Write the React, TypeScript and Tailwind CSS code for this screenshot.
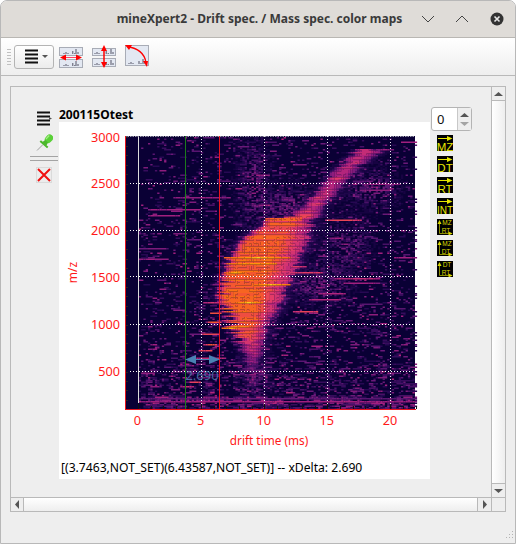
import { useMemo } from "react";

const PALETTE: [number, number[]][] = [
    [0, [10, 0, 53]],
    [0.15, [40, 8, 84]],
    [0.3, [100, 24, 120]],
    [0.45, [168, 32, 128]],
    [0.6, [226, 58, 106]],
    [0.72, [244, 84, 50]],
    [0.82, [250, 118, 16]],
    [0.92, [255, 160, 10]],
    [1, [255, 214, 40]],
];

const LEVELS = 24;

const RIDGE = [
    [149, 356, 376],
    [152, 352, 378],
    [165, 340, 358],
    [180, 325, 345],
    [200, 308, 328],
    [215, 290, 318],
    [218, 268, 310],
    [240, 240, 306],
    [258, 228, 296],
    [275, 220, 290],
    [300, 222, 280],
    [320, 228, 267],
    [335, 237, 263],
    [350, 241, 259],
    [365, 247, 257],
    [385, 250, 255],
];

const STREAKS = [
    [197, 174, 230, 0.42],
    [209, 150, 200, 0.45],
    [216, 150, 178, 0.45],
    [248, 138, 165, 0.36],
    [259, 138, 168, 0.42],
    [220, 326, 360, 0.66],
    [238, 330, 342, 0.45],
    [184, 365, 400, 0.42],
    [190, 360, 390, 0.4],
    [150, 378, 392, 0.42],
    [258, 395, 415, 0.45],
    [266, 285, 305, 0.6],
    [272, 290, 322, 0.62],
    [279, 335, 380, 0.52],
    [283, 345, 375, 0.45],
    [293, 320, 345, 0.5],
    [299, 310, 340, 0.5],
    [312, 295, 316, 0.66],
    [303, 205, 218, 0.56],
    [313, 212, 220, 0.72],
    [322, 208, 220, 0.72],
    [334, 203, 218, 0.66],
    [344, 205, 217, 0.72],
    [350, 200, 212, 0.66],
    [358, 198, 225, 0.52],
    [382, 190, 200, 0.66],
    [386, 182, 192, 0.56],
    [303, 233, 263, 0.98],
    [284, 252, 290, 0.97],
    [257, 226, 290, 0.97],
    [263, 228, 275, 0.9],
    [272, 225, 245, 0.96],
    [328, 222, 238, 0.96],
    [218, 267, 300, 0.8],
    [220, 266, 300, 0.78],
    [398, 138, 415, 0.3],
    [402, 138, 415, 0.46],
];

function colorAt(v: number) {
    for (let i = 1; i < PALETTE.length; i++) {
        if (v <= PALETTE[i][0]) {
            const [a, ca] = PALETTE[i - 1];
            const [b, cb] = PALETTE[i];
            const t = (v - a) / (b - a);
            const c = ca.map((n, k) => Math.round(n + (cb[k] - n) * t));
            return `rgb(${c[0]},${c[1]},${c[2]})`;
        }
    }
    return "rgb(255,214,40)";
}

function makeRandom(seed: number) {
    let s = seed;
    return () => {
        s = (s + 0x6d2b79f5) | 0;
        let t = Math.imul(s ^ (s >>> 15), 1 | s);
        t = (t + Math.imul(t ^ (t >>> 7), 61 | t)) ^ t;
        return ((t ^ (t >>> 14)) >>> 0) / 4294967296;
    };
}

function ridgeAt(y: number) {
    if (y < RIDGE[0][0] || y > RIDGE[RIDGE.length - 1][0]) return null;
    for (let i = 1; i < RIDGE.length; i++) {
        if (y <= RIDGE[i][0]) {
            const t = (y - RIDGE[i - 1][0]) / (RIDGE[i][0] - RIDGE[i - 1][0]);
            return [
                RIDGE[i - 1][1] + (RIDGE[i][1] - RIDGE[i - 1][1]) * t,
                RIDGE[i - 1][2] + (RIDGE[i][2] - RIDGE[i - 1][2]) * t,
            ];
        }
    }
    return null;
}

function coreAt(y: number) {
    if (y < 215) return 0.54;
    if (y < 240) return 0.66 + ((y - 215) / 25) * 0.12;
    if (y < 305) return 0.8;
    if (y < 330) return 0.8 - ((y - 305) / 25) * 0.06;
    if (y < 365) return 0.74 - ((y - 330) / 35) * 0.4;
    return 0.3;
}

function blob(x: number, y: number, cx: number, cy: number, rx: number, ry: number) {
    return Math.exp(-Math.pow((x - cx) / rx, 2) - Math.pow((y - cy) / ry, 2));
}

// heat map cells grouped by colour level, one path per level
function buildHeatPaths() {
    const rand = makeRandom(200115);
    const paths: string[] = Array.from({ length: LEVELS }, () => "");
    const cw = 2.3;
    const ch = 1.5;
    for (let y = 137; y < 409; y += ch) {
        const ridge = ridgeAt(y);
        const rowAmp = 0.6 + rand() * 0.6;
        const stripe = rand() < 0.12 ? 1.1 : 0.86 + rand() * 0.16;
        const density = y > 395 ? 0.72 : y > 360 ? 0.4 : y > 300 ? 0.22 : 0.15;
        const spread = y > 280 && y < 345 ? 16 : 7;
        const jl = (rand() - 0.5) * spread;
        const jh = (rand() - 0.5) * 7;
        let prev = 0;
        for (let x = 138.8; x < 415; x += cw) {
            let v = rand() < 0.3 ? prev : rand() < density ? 0.14 + Math.pow(rand(), 1.5) * 0.3 * rowAmp : 0;
            prev = v;

            // faint plumes around the main body
            const haze =
                blob(x, y, 252, 185, 16, 50) * 0.3 +
                blob(x, y, 372, 188, 24, 18) * 0.34 +
                blob(x, y, 345, 245, 24, 24) * 0.3 +
                blob(x, y, 318, 285, 28, 18) * 0.32 +
                blob(x, y, 290, 205, 24, 20) * 0.32 +
                blob(x, y, 252, 375, 14, 25) * 0.34;
            if (rand() < 0.6) v = Math.max(v, haze * (0.5 + rand() * 0.8));

            if (ridge) {
                const l = ridge[0] + jl;
                const h = Math.max(l + 2, ridge[1] + jh);
                const t = (x - l) / (h - l);
                const core = coreAt(y);
                let body = 0;
                if (t >= 0 && t <= 1) {
                    const fall = t > 0.6 ? 1 - ((t - 0.6) / 0.4) * 0.36 : 1;
                    const edge = Math.min(1, (x - l) / 7);
                    body = core * fall * (0.68 + 0.32 * edge) * stripe * (0.97 + rand() * 0.06);
                } else {
                    const d = t < 0 ? l - x : x - h;
                    body = core * 0.55 * Math.exp(-d / (t < 0 ? 4 : 6)) * (0.45 + rand() * 0.7);
                }
                v = Math.max(v, body);
            }

            for (const [sy, x1, x2, sv] of STREAKS) {
                if (y <= sy && sy < y + ch && x + cw > x1 && x < x2) {
                    const pos = Math.abs((x - (x1 + x2) / 2) / ((x2 - x1) / 2));
                    const edge = sv > 0.9 ? 1 - 0.2 * pos : 1 - 0.2 * pos * rand();
                    v = Math.max(v, sv * edge);
                }
            }

            const level = Math.min(LEVELS - 1, Math.floor(Math.min(1, v) * LEVELS));
            if (level > 0) {
                paths[level] += `M${x.toFixed(1)} ${y}h${cw}v${ch}h-${cw}z`;
            }
        }
    }
    return paths;
}

function MenuGlyph({ className, arrow }: { className: string; arrow?: boolean }) {
    return (
        <svg viewBox="0 0 16 15" className={className}>
            <path d="M1 0.500h13v2H1zM1 4.500h13v2H1zM1 8.500h13v2H1zM1 12.500h13v2H1z" fill="#111" />
            {arrow ? <path d="M13 6l3 1.500-3 1.500z" fill="#555" /> : null}
        </svg>
    );
}

function Peaks({ x, y, w }: { x: number; y: number; w: number }) {
    return (
        <path
            d={`M${x + 2} ${y}v-1M${x + 4} ${y}v-2M${x + 6} ${y}v-1M${x + w * 0.6} ${y}v-3M${x + w * 0.6 + 2} ${y}v-1M${x + w - 4} ${y}v-5M${x + w - 2} ${y}v-2`}
            stroke="#556"
            strokeWidth="1"
        />
    );
}

function HorizontalIcon() {
    return (
        <svg viewBox="0 0 24 22" className="h-[22px] w-6">
            <rect x="0.500" y="1.500" width="23" height="8" fill="#e3e8f2" stroke="#a8acb6" />
            <rect x="0.500" y="13.500" width="23" height="8" fill="#e3e8f2" stroke="#a8acb6" />
            <Peaks x={3} y={8} w={18} />
            <Peaks x={3} y={20} w={18} />
            <path d="M5 11.500h14" stroke="#f46" strokeWidth="1" />
            <path d="M1 11.500l6-3v6zM23 11.500l-6-3v6z" fill="#f00" />
        </svg>
    );
}

function VerticalIcon() {
    return (
        <svg viewBox="0 0 24 23" className="h-[23px] w-6">
            <rect x="0.500" y="3.500" width="23" height="7" fill="#e3e8f2" stroke="#a8acb6" />
            <rect x="0.500" y="13.500" width="23" height="8" fill="#e3e8f2" stroke="#a8acb6" />
            <Peaks x={1} y={9} w={22} />
            <Peaks x={1} y={20} w={22} />
            <path d="M12 4v15" stroke="#f00" strokeWidth="1.500" />
            <path d="M12 0l-3 6h6zM12 23l-3-6h6z" fill="#f00" />
        </svg>
    );
}

function CurveIcon() {
    return (
        <svg viewBox="0 0 24 22" className="mb-[1px] h-[22px] w-6">
            <rect x="0.500" y="0.500" width="23" height="20" fill="#e3e8f2" stroke="#a8acb6" />
            <Peaks x={2} y={19} w={20} />
            <path d="M3 2C12 3 20 8 21 18" fill="none" stroke="#f00" strokeWidth="1.300" />
            <path d="M0 0l7 0-3 5zM22 22l-4-6 5 0z" fill="#f00" />
        </svg>
    );
}

function PinIcon() {
    return (
        <svg viewBox="0 0 17 17" className="h-[17px] w-[17px]">
            <path d="M1 16.500l6-6" stroke="#a0a0a0" strokeWidth="1" />
            <g transform="rotate(42 10 8)">
                <rect x="6.500" y="-1" width="7" height="9" rx="3.400" fill="#5ad038" />
                <path d="M8 7h4l0.500 3h2.500v2h-10v-2h2.500z" fill="#4cb82c" />
                <path d="M8 1v5" stroke="#a4ee84" strokeWidth="1.300" />
            </g>
        </svg>
    );
}

function CloseIcon() {
    return (
        <svg viewBox="0 0 16 16" className="h-4 w-4">
            <rect x="0.500" y="0.500" width="15" height="15" fill="#ececec" stroke="#dadada" />
            <path d="M2 2l12 12M14 2l-12 12" stroke="#f01010" strokeWidth="2" />
        </svg>
    );
}

function ArrowBadge({ label }: { label: string }) {
    return (
        <svg viewBox="0 0 16 16" className="h-4 w-4">
            <rect width="16" height="16" fill="#000" />
            <path d="M1 3.500h10" stroke="#e6e600" strokeWidth="1" />
            <path d="M15.500 3.500l-5.500-2.500v5z" fill="#e6e600" />
            <text
                x="8"
                y="15.500"
                textAnchor="middle"
                fontSize={label.length > 2 ? 10 : 11.500}
                fill="#e6e600"
                fontFamily="'Liberation Sans', sans-serif"
            >
                {label}
            </text>
        </svg>
    );
}

function ColorMapBadge({ top, bottom }: { top: string; bottom: string }) {
    return (
        <svg viewBox="0 0 16 16" className="h-4 w-4">
            <rect width="16" height="16" fill="#000" />
            <path d="M2.500 2v12.500H15" stroke="#8c8c00" strokeWidth="1" fill="none" />
            <path d="M2.500 1l-2 4h4zM15.500 14.500l-4-2v4z" fill="#d8d800" />
            <text x="10" y="6" textAnchor="middle" fontSize="6.500" fill="#d8d800" fontFamily="'Liberation Sans', sans-serif">
                {top}
            </text>
            <text x="9" y="13.500" textAnchor="middle" fontSize="6.500" fill="#d8d800" fontFamily="'Liberation Sans', sans-serif">
                {bottom}
            </text>
        </svg>
    );
}

function ScrollArrow({ dir }: { dir: "up" | "down" | "left" | "right" }) {
    const d = {
        up: "M0 5l4.500-4 4.500 4z",
        down: "M0 1l4.500 4 4.500-4z",
        left: "M5 0l-4 4.500 4 4.500z",
        right: "M1 0l4 4.500-4 4.500z",
    }[dir];
    const box = dir === "up" || dir === "down" ? "0 0 9 6" : "0 0 6 9";
    const size = dir === "up" || dir === "down" ? "h-[6px] w-[9px]" : "h-[9px] w-[6px]";
    return (
        <svg viewBox={box} className={size}>
            <path d={d} fill="#555" />
        </svg>
    );
}

function HeatMap() {
    const paths = useMemo(buildHeatPaths, []);
    const xTicks = Array.from({ length: 23 }, (_, i) => i);
    const yTicks = Array.from({ length: 29 }, (_, i) => 136.5 + i * 9.4);
    const yLabels = [
        [3000, 137],
        [2500, 183.3],
        [2000, 230],
        [1500, 276.7],
        [1000, 324.3],
        [500, 371],
    ];
    const font = "'Noto Sans', sans-serif";
    return (
        <svg viewBox="59 122 371 331" className="block h-[331px] w-[371px]">
            <rect x="125" y="136" width="290" height="273.500" fill="#0a0035" />
            {paths.map((d, i) => (d ? <path key={i} d={d} fill={colorAt((i + 0.5) / LEVELS)} /> : null))}
            <path d="M138.500 136v267" stroke="#dcdcdc" strokeWidth="1" />
            <path d="M125 136.500h290" stroke="#a0a0b0" strokeDasharray="1.500 1" />
            {[183.5, 230.5, 276.5, 324.5, 371.5].map((y) => (
                <path key={y} d={`M130 ${y}h285`} stroke="#fff" strokeDasharray="1 2" />
            ))}
            {[201.5, 264.5, 327.5, 390.5].map((x) => (
                <path key={x} d={`M${x} 136v273`} stroke="#fff" strokeDasharray="1 2" opacity="0.9" />
            ))}
            <path d="M185.500 136v273" stroke="#1c7a1c" />
            <path d="M219.500 136v273" stroke="#e8141c" />

            {/* measure arrow */}
            <path d="M192 359.500h20" stroke="#4a82b4" strokeWidth="1" />
            <path d="M185 359.500l11-4.500v9zM220 359.500l-11-4.500v9z" fill="#4a82b4" />
            <text x="202" y="380" textAnchor="middle" fontSize="13" fill="#4a82b4" fillOpacity="0.8" fontFamily={font}>
                2.690
            </text>

            {/* axes */}
            {yTicks.map((y) => (
                <path key={y} d={`M125 ${Math.round(y) + 0.5}h3`} stroke="#222" />
            ))}
            <path d="M125.500 136v274" stroke="#e8141c" />
            <path d="M125 409.500h291" stroke="#e8141c" />
            {xTicks.map((t) => (
                <path
                    key={t}
                    d={`M${Math.round(138 + t * 12.62) + 0.5} 409v${t % 5 === 0 ? -5 : -3}`}
                    stroke="#111"
                />
            ))}
            {yLabels.map(([label, y]) => (
                <text key={label} x="120" y={y + 5} textAnchor="end" fontSize="12.700" fill="#ff1a1a" fontFamily={font}>
                    {label}
                </text>
            ))}
            {[0, 5, 10, 15, 20].map((t) => (
                <text
                    key={t}
                    x={137.5 + t * 12.62}
                    y="425"
                    textAnchor="middle"
                    fontSize="12.700"
                    fill="#ff1a1a"
                    fontFamily={font}
                >
                    {t}
                </text>
            ))}
            <text x="269" y="445" textAnchor="middle" fontSize="11.800" fill="#ff1a1a" fontFamily={font}>
                drift time (ms)
            </text>
            <text
                transform="translate(77 272.500) rotate(-90)"
                textAnchor="middle"
                fontSize="12"
                fill="#ff1a1a"
                fontFamily={font}
            >
                m/z
            </text>
        </svg>
    );
}

export default function App() {
    return (
        <div className="relative flex h-[544px] w-[516px] flex-col overflow-hidden rounded-t-[7px] border border-[#b8b8b8] bg-[#eeeeee] font-['Noto_Sans',sans-serif] text-[#111]">
            <header className="relative flex h-[37px] shrink-0 items-center justify-center border-b border-[#b9b7b3] bg-[#dfdcd8] pl-[3px]">
                <span className="text-[12px] font-bold text-[#3a3a3a]">mineXpert2 - Drift spec. / Mass spec. color maps</span>
                <div className="absolute right-[11px] top-0 flex h-[36px] items-center gap-[20px]">
                    <svg viewBox="0 0 14 8" className="h-2 w-[14px]">
                        <path d="M1 1l6 6 6-6" fill="none" stroke="#444" strokeWidth="1" />
                    </svg>
                    <svg viewBox="0 0 14 8" className="h-2 w-[14px]">
                        <path d="M1 7l6-6 6 6" fill="none" stroke="#444" strokeWidth="1" />
                    </svg>
                    <svg viewBox="0 0 14 14" className="ml-[1px] h-[14px] w-[14px]">
                        <circle cx="7" cy="7" r="6.500" fill="#333" />
                        <path d="M4.500 4.500l5 5M9.500 4.500l-5 5" stroke="#e8e8e8" strokeWidth="1.600" />
                    </svg>
                </div>
            </header>

            <div className="flex h-[38px] shrink-0 items-center border-b border-[#b9b9b9] bg-gradient-to-b from-white to-[#eeeeee] pl-[6px]">
                <div className="h-[18px] w-[4px] bg-[radial-gradient(#c0c0c0_40%,transparent_45%)] bg-[length:2px_3px]" />
                <button className="ml-[3px] flex h-[24px] w-[40px] items-center justify-center gap-[2px] rounded-[3px] border border-[#b4b4b4] bg-gradient-to-b from-white to-[#ececec] pl-[3px]">
                    <MenuGlyph className="h-[15px] w-4" />
                    <svg viewBox="0 0 6 4" className="h-1 w-[6px]">
                        <path d="M0 0h6l-3 3z" fill="#555" />
                    </svg>
                </button>
                <div className="ml-[5px] flex items-center gap-[9px]">
                    <HorizontalIcon />
                    <VerticalIcon />
                    <CurveIcon />
                </div>
            </div>

            <div className="flex min-h-0 flex-1 flex-col px-[9px] pb-[31px] pt-[10px]">
                <div className="flex min-h-0 flex-1 flex-col border border-[#b9b9b9]">
                    <div className="flex min-h-0 flex-1">
                        <div className="flex min-w-0 flex-1 pl-[19px] pt-[20px]">
                            <div className="flex w-[29px] shrink-0 flex-col pt-[4px]">
                                <MenuGlyph className="ml-[6px] h-[15px] w-4" arrow />
                                <div className="ml-[6px] mt-[8px]">
                                    <PinIcon />
                                </div>
                                <div className="mt-[5px] h-[5px] w-[28px] border-y border-[#a4a4a4]" />
                                <div className="ml-[6px] mt-[6px]">
                                    <CloseIcon />
                                </div>
                            </div>
                            <div className="w-[371px] shrink-0">
                                <div className="h-[15px] text-[12px] font-bold leading-[15px] text-black">200115Otest</div>
                                <div className="h-[357px] bg-white">
                                    <HeatMap />
                                    <div className="pl-[2px] text-[12.150px] leading-[30px] text-black">
                                        [(3.7463,NOT_SET)(6.43587,NOT_SET)] -- xDelta: 2.690
                                    </div>
                                </div>
                            </div>
                            <div className="ml-[1px] flex flex-col">
                                <div className="flex h-[24px] w-[41px] rounded-[3px] border border-[#b4b4b4] bg-white text-[13px]">
                                    <span className="flex-1 pl-[5px] leading-[22px]">0</span>
                                    <div className="flex w-[14px] flex-col items-center justify-center gap-[3px] border-l border-[#c8c8c8] bg-[#eeeeee]">
                                        <ScrollArrow dir="up" />
                                        <svg viewBox="0 0 9 6" className="h-[6px] w-[9px]">
                                            <path d="M0 1l4.500 4 4.500-4z" fill="#a4a4a4" />
                                        </svg>
                                    </div>
                                </div>
                                <div className="ml-[6px] mt-[4px] flex flex-col gap-[5px]">
                                    <ArrowBadge label="MZ" />
                                    <ArrowBadge label="DT" />
                                    <ArrowBadge label="RT" />
                                    <ArrowBadge label="INT" />
                                    <ColorMapBadge top="MZ" bottom="RT" />
                                    <ColorMapBadge top="MZ" bottom="DT" />
                                    <ColorMapBadge top="DT" bottom="RT" />
                                </div>
                            </div>
                        </div>
                        <div className="flex w-[14px] shrink-0 flex-col border-l border-[#b9b9b9]">
                            <div className="flex h-[14px] items-center justify-center border-b border-[#b9b9b9]">
                                <ScrollArrow dir="up" />
                            </div>
                            <div className="flex-1 bg-gradient-to-r from-white to-[#eeeeee]" />
                            <div className="flex h-[14px] items-center justify-center border-t border-[#b9b9b9]">
                                <ScrollArrow dir="down" />
                            </div>
                        </div>
                    </div>
                    <div className="flex h-[14px] shrink-0 border-t border-[#b9b9b9]">
                        <div className="flex w-[13px] items-center justify-center border-r border-[#b9b9b9]">
                            <ScrollArrow dir="left" />
                        </div>
                        <div className="flex-1 bg-gradient-to-b from-white to-[#eeeeee]" />
                        <div className="flex w-[14px] items-center justify-center border-l border-[#b9b9b9]">
                            <ScrollArrow dir="right" />
                        </div>
                        <div className="w-[14px] border-l border-[#b9b9b9]" />
                    </div>
                </div>
            </div>
            <svg viewBox="0 0 10 10" className="absolute bottom-[3px] right-[1px] h-[10px] w-[10px]">
                <path d="M8 1h1v1H8zM5 4h1v1H5zM8 4h1v1H8zM2 7h1v1H2zM5 7h1v1H5zM8 7h1v1H8z" fill="#b4b4b4" />
            </svg>
        </div>
    );
}
